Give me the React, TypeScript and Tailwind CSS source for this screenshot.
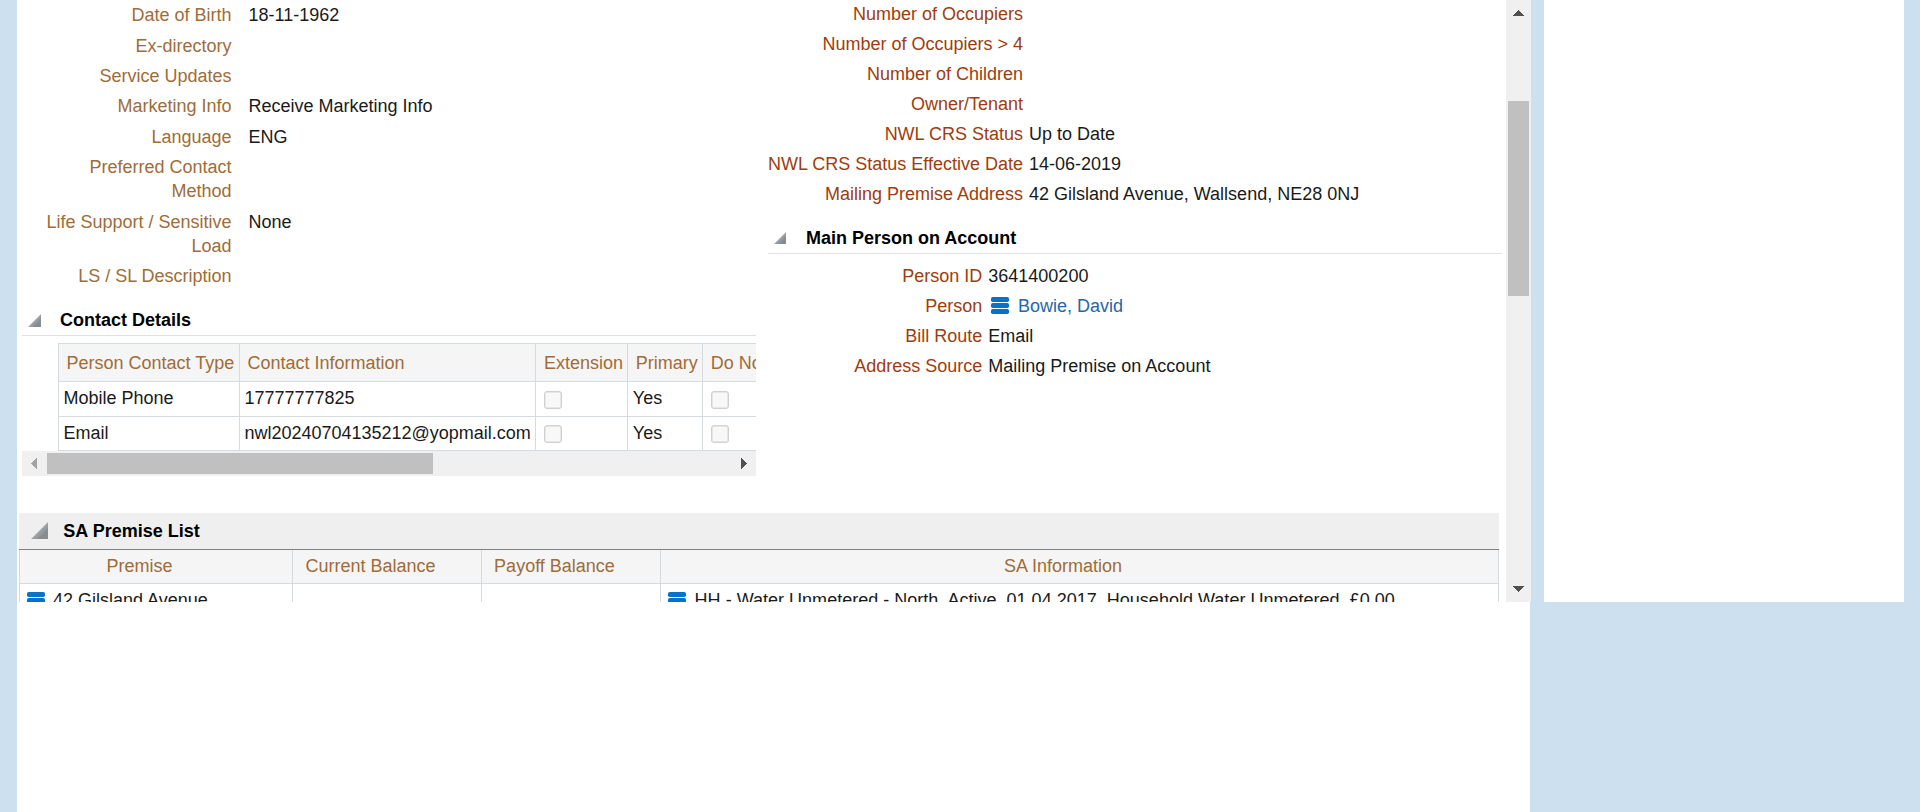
import type { ReactNode } from "react";

type Field = { label: ReactNode; value?: ReactNode; row: string };

const personFields: Field[] = [
  { label: "Date of Birth", value: "18-11-1962", row: "h-[31px]" },
  { label: "Ex-directory", row: "h-[30px]" },
  { label: "Service Updates", row: "h-[30px]" },
  { label: "Marketing Info", value: "Receive Marketing Info", row: "h-[31px]" },
  { label: "Language", value: "ENG", row: "h-[30px]" },
  { label: "Preferred Contact Method", row: "h-[55px]" },
  { label: "Life Support / Sensitive Load", value: "None", row: "h-[54px]" },
  { label: "LS / SL Description", row: "h-[30px]" },
];

const accountFields: [string, string][] = [
  ["Number of Occupiers", ""],
  ["Number of Occupiers > 4", ""],
  ["Number of Children", ""],
  ["Owner/Tenant", ""],
  ["NWL CRS Status", "Up to Date"],
  ["NWL CRS Status Effective Date", "14-06-2019"],
  ["Mailing Premise Address", "42 Gilsland Avenue, Wallsend, NE28 0NJ"],
];

const contacts = [
  { type: "Mobile Phone", info: "17777777825", primary: "Yes", row: "h-[35px]", check: "pt-[9px]" },
  { type: "Email", info: "nwl20240704135212@yopmail.com", primary: "Yes", row: "h-[34px]", check: "pt-[8px]" },
];

function Twisty({ size }: { size: number }) {
  return (
    <svg width={size} height={size} viewBox="0 0 12 12" className="block shrink-0">
      <defs>
        <linearGradient id="twisty" x1="0" y1="0" x2="1" y2="1">
          <stop offset="0.45" stopColor="#a9adb1" />
          <stop offset="0.75" stopColor="#868b90" />
        </linearGradient>
      </defs>
      <path d="M0 12 L12 0 V12 Z" fill="url(#twisty)" />
    </svg>
  );
}

function MenuIcon() {
  return (
    <svg width="18" height="18" viewBox="0 0 18 18" className="block shrink-0">
      <rect x="0" y="0" width="18" height="5" rx="1.8" fill="#0572ce" />
      <rect x="0" y="6" width="18" height="5" rx="1.8" fill="#0572ce" />
      <rect x="0" y="12" width="18" height="5" rx="1.8" fill="#0572ce" />
    </svg>
  );
}

function Arrow({ points, w, h, fill }: { points: string; w: number; h: number; fill: string }) {
  return (
    <svg width={w} height={h} className="block" shapeRendering="crispEdges">
      <polygon points={points} fill={fill} />
    </svg>
  );
}

function Checkbox() {
  return <span className="block size-[18px] rounded-[3px] border border-[#d0d0d0] bg-[#f8f8f8] shadow-[inset_0_0_0_0.5px_#d6d6d6]" />;
}

function AccountRow({ label, labelWidth, children }: { label: string; labelWidth: string; children?: ReactNode }) {
  return (
    <div className="flex h-[30px] whitespace-nowrap">
      <div className={`${labelWidth} shrink-0 text-right text-[#a03c0c]`}>{label}</div>
      <div className="ml-[6px] flex">{children}</div>
    </div>
  );
}

function PersonColumn() {
  return (
    <div className="flex w-[734px] shrink-0 flex-col overflow-hidden">
      <div className="flex h-[301px] flex-col pt-[3px]">
        {personFields.map((f, i) => (
          <div key={i} className={`flex ${f.row}`}>
            <div className="w-[209.6px] shrink-0 pl-[20px] text-right text-[#a06c38]">{f.label}</div>
            <div className="ml-[16.9px]">{f.value}</div>
          </div>
        ))}
      </div>
      <div className="flex h-[35px] items-start border-b border-[#dfe1e3] pl-[6px]">
        <div className="pt-[13px]">
          <Twisty size={13} />
        </div>
        <h2 className="ml-[19px] pt-[7px] font-bold text-black">Contact Details</h2>
      </div>
      <div className="mt-[7px] ml-[36px] flex w-[900px] flex-col border-l border-t border-[#d6dbe0]">
        <div className="flex h-[38px] border-b border-[#d6dbe0] bg-[#f5f5f5] leading-[38px] whitespace-nowrap text-[#a06c38]">
          <div className="w-[181px] shrink-0 border-r border-[#d6dbe0] pl-[7.4px]">Person Contact Type</div>
          <div className="w-[296px] shrink-0 border-r border-[#d6dbe0] pl-[7.4px]">Contact Information</div>
          <div className="w-[92px] shrink-0 border-r border-[#d6dbe0] pl-[8px]">Extension</div>
          <div className="w-[75px] shrink-0 border-r border-[#d6dbe0] pl-[7.8px]">Primary</div>
          <div className="pl-[7.8px]">Do Not Contact</div>
        </div>
        {contacts.map((c) => (
          <div key={c.type} className={`flex items-stretch border-b border-[#d6dbe0] ${c.row} leading-[32px] whitespace-nowrap`}>
            <div className="w-[181px] shrink-0 border-r border-[#d6dbe0] pl-[4.4px]">{c.type}</div>
            <div className="w-[296px] shrink-0 border-r border-[#d6dbe0] pl-[4.4px]">{c.info}</div>
            <div className={`w-[92px] shrink-0 border-r border-[#d6dbe0] pl-[8px] ${c.check}`}>
              <Checkbox />
            </div>
            <div className="w-[75px] shrink-0 border-r border-[#d6dbe0] pl-[4.8px]">{c.primary}</div>
            <div className={`pl-[8px] ${c.check}`}>
              <Checkbox />
            </div>
          </div>
        ))}
      </div>
      <div className="flex h-[25px] items-center bg-[#f0f0f0] pl-[9px]">
        <Arrow w={6} h={11} points="6,0 6,11 0,5.5" fill="#a3a3a3" />
        <div className="ml-[10px] h-[21px] w-[386px] bg-[#c0c0c0]" />
        <div className="ml-auto pr-[9px]">
          <Arrow w={6} h={11} points="0,0 0,11 6,5.5" fill="#505050" />
        </div>
      </div>
    </div>
  );
}

function AccountColumn() {
  return (
    <div className="ml-[12px] flex w-[734px] shrink-0 flex-col">
      <div className="flex h-[219px] flex-col pt-[2px]">
        {accountFields.map(([label, value]) => (
          <AccountRow key={label} label={label} labelWidth="w-[255px]">
            {value}
          </AccountRow>
        ))}
      </div>
      <div className="flex h-[35px] items-start border-b border-[#dfe1e3] pl-[6px]">
        <div className="pt-[13px]">
          <Twisty size={12} />
        </div>
        <h2 className="ml-[20px] pt-[7px] font-bold text-black">Main Person on Account</h2>
      </div>
      <div className="flex flex-col pt-[10px]">
        <AccountRow label="Person ID" labelWidth="w-[214.3px]">3641400200</AccountRow>
        <AccountRow label="Person" labelWidth="w-[214.3px]">
          <span className="mt-[3px] mr-[9px] ml-[2.7px]">
            <MenuIcon />
          </span>
          <a className="text-[#2467a9]">Bowie, David</a>
        </AccountRow>
        <AccountRow label="Bill Route" labelWidth="w-[214.3px]">Email</AccountRow>
        <AccountRow label="Address Source" labelWidth="w-[214.3px]">Mailing Premise on Account</AccountRow>
      </div>
    </div>
  );
}

function PremiseList() {
  return (
    <div className="ml-[2px] flex w-[1480px] flex-col whitespace-nowrap">
      <div className="flex h-[37px] items-start border-b border-[#808080] bg-[#efefef] pl-[12px]">
        <div className="pt-[9px]">
          <Twisty size={17} />
        </div>
        <h2 className="ml-[15.3px] pt-[6px] font-bold text-black">SA Premise List</h2>
      </div>
      <div className="flex h-[34px] border-x border-b border-[#d6dbe0] bg-[#f5f5f5] text-center leading-[32px] text-[#a06c38]">
        <div className="w-[273px] border-r border-[#d6dbe0] pr-[33px]">Premise</div>
        <div className="w-[189px] border-r border-[#d6dbe0] pr-[33px]">Current Balance</div>
        <div className="w-[179px] border-r border-[#d6dbe0] pr-[33px]">Payoff Balance</div>
        <div className="flex-1 pr-[33px]">SA Information</div>
      </div>
      <div className="flex h-[40px] border-x border-[#d6dbe0]">
        <div className="flex w-[273px] border-r border-[#d6dbe0] pt-[4px] pl-[7px]">
          <span className="mt-[4px] mr-[8px]">
            <MenuIcon />
          </span>
          42 Gilsland Avenue
        </div>
        <div className="w-[189px] border-r border-[#d6dbe0]" />
        <div className="w-[179px] border-r border-[#d6dbe0]" />
        <div className="flex flex-1 pt-[4px] pl-[7px] tracking-[0.014px]">
          <span className="mt-[4px] mr-[8.6px]">
            <MenuIcon />
          </span>
          HH - Water Unmetered - North, Active, 01.04.2017, Household Water Unmetered, £0.00
        </div>
      </div>
    </div>
  );
}

export default function App() {
  return (
    <div className="flex h-[812px] w-[1920px] flex-col overflow-hidden bg-[#cce0ef] font-['Liberation_Sans',Arial,sans-serif] text-[18px] leading-[24px] text-[#1a1a1a]">
      <div className="flex h-[602px] shrink-0 pl-[17px]">
        <main className="h-[602px] w-[1489px] shrink-0 overflow-hidden bg-white">
          <div className="flex h-[513px] pl-[5px]">
            <PersonColumn />
            <AccountColumn />
          </div>
          <PremiseList />
        </main>
        <div className="flex w-[25px] shrink-0 flex-col items-center bg-[#f0f0f0] pt-[10px] pb-[10px]">
          <Arrow w={11} h={6} points="0,6 11,6 5.5,0" fill="#505050" />
          <div className="mt-[85px] h-[195px] w-[21px] bg-[#c0c0c0]" />
          <div className="mt-auto">
            <Arrow w={11} h={6} points="0,0 11,0 5.5,6" fill="#505050" />
          </div>
        </div>
        <aside className="ml-[13px] h-[602px] w-[360px] shrink-0 bg-white" />
      </div>
      <div className="ml-[17px] w-[1513px] flex-1 bg-white" />
    </div>
  );
}
